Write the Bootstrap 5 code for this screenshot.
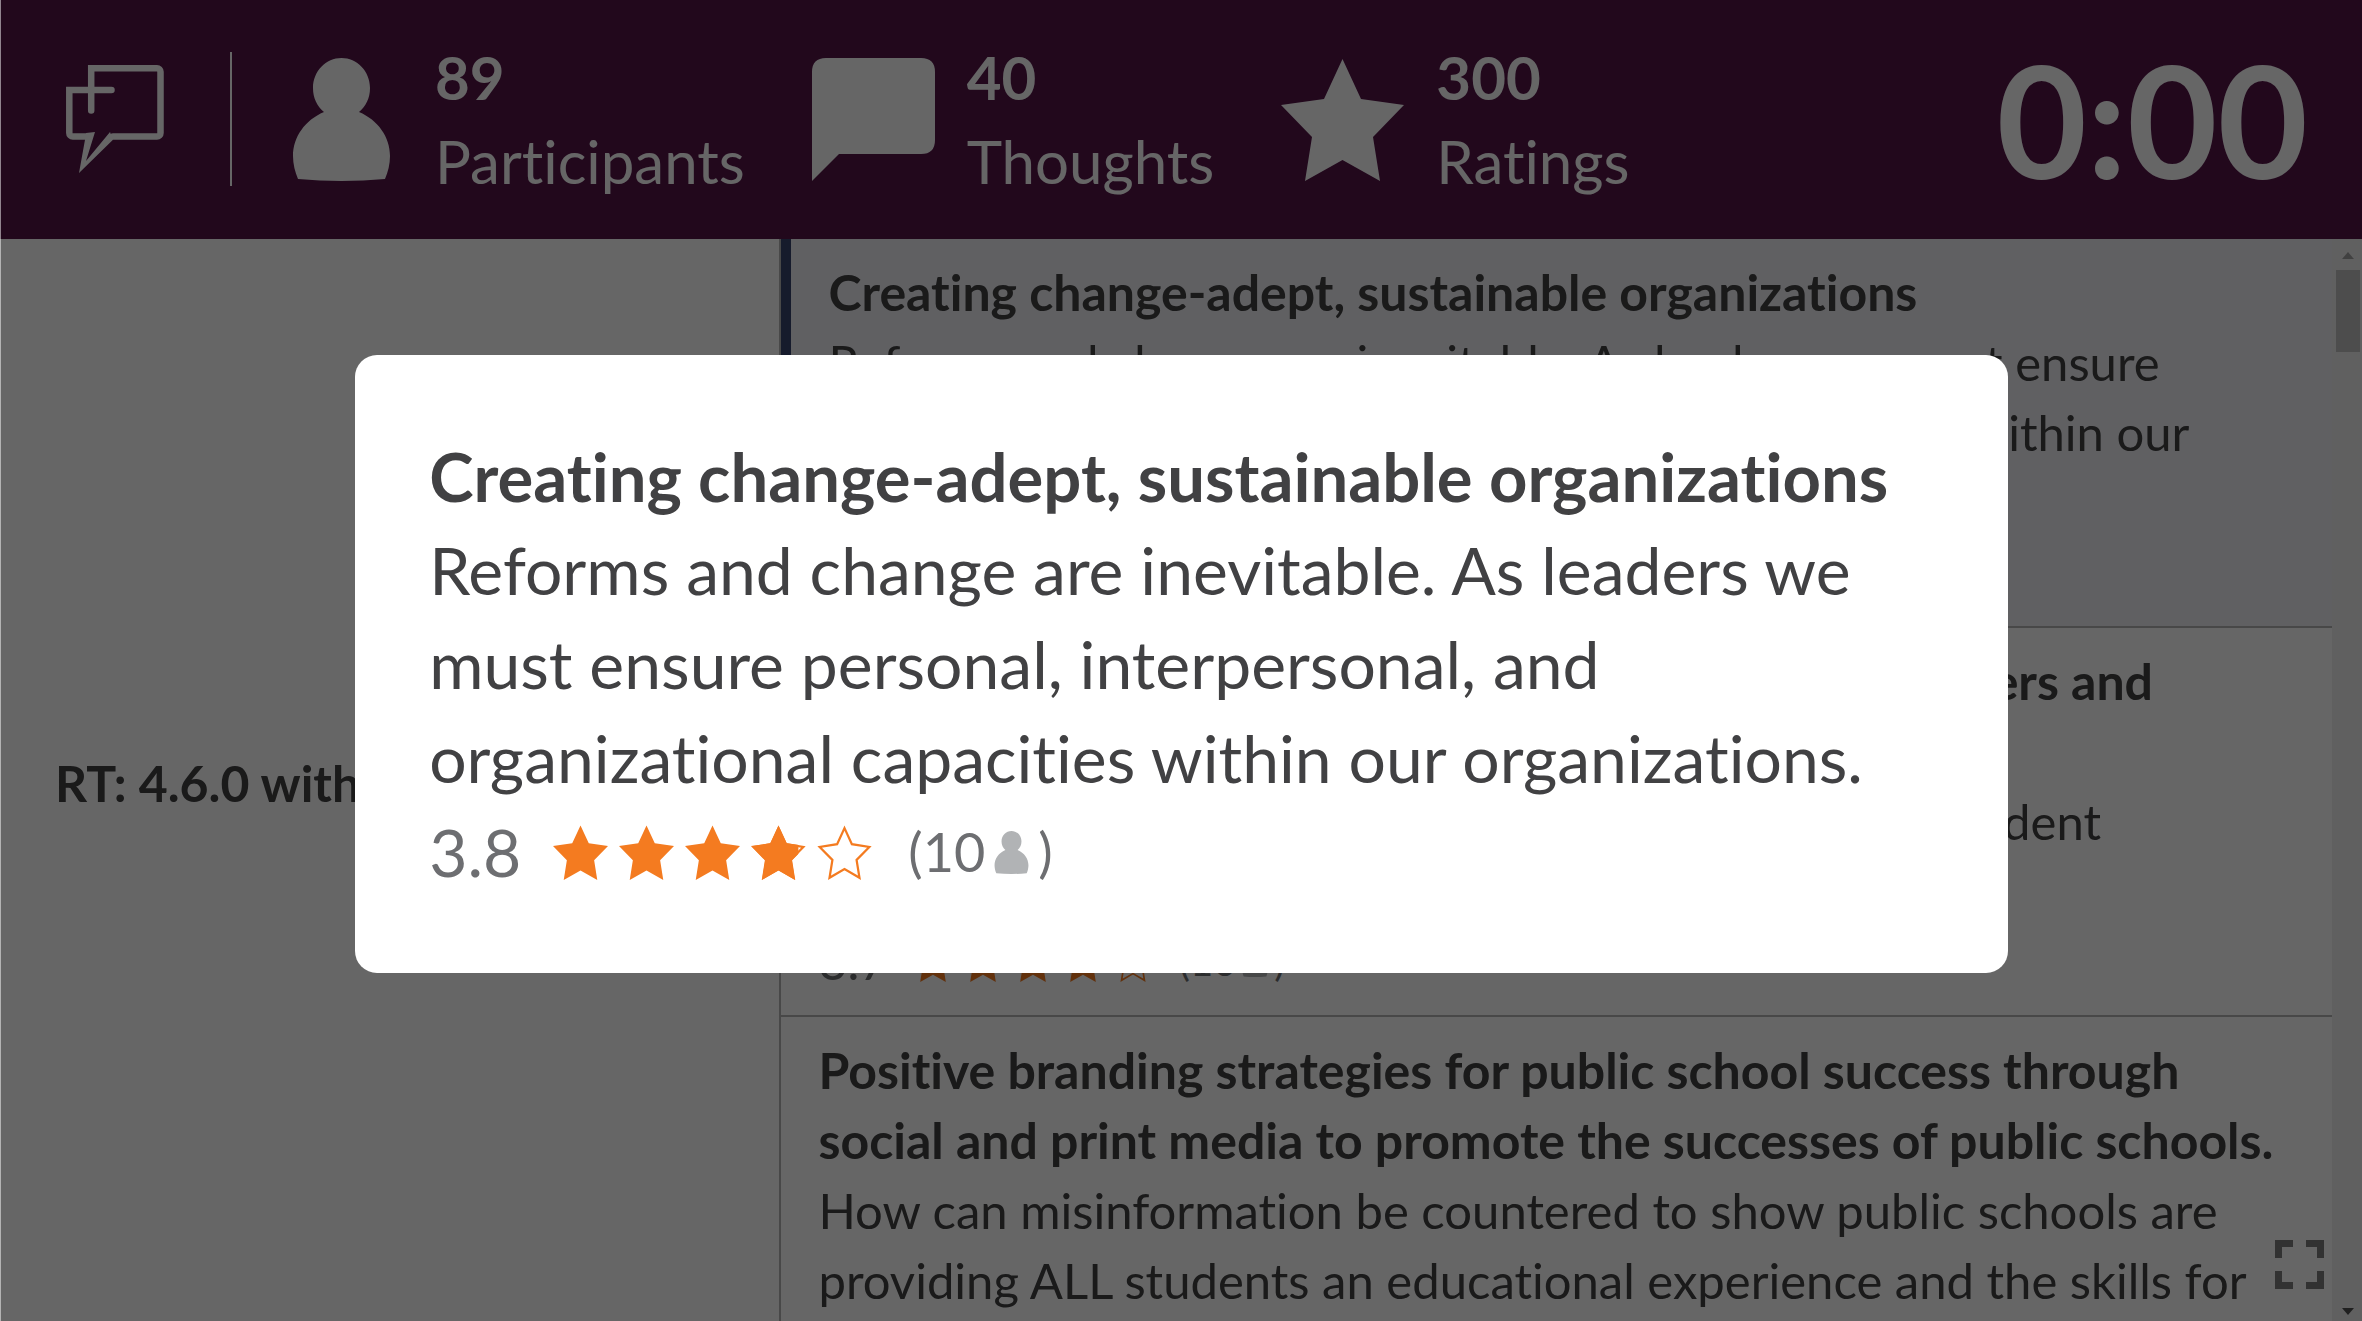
<!DOCTYPE html>
<html lang="en">
<head>
<meta charset="utf-8">
<meta name="viewport" content="width=device-width, initial-scale=1">
<title>Thoughts</title>
<link href="https://cdn.jsdelivr.net/npm/bootstrap@5.3.0/dist/css/bootstrap.min.css" rel="stylesheet">
<style>
  body { font-family: Lato, "Noto Sans", sans-serif; font-variant-ligatures: none; color: #414143; background: #fff; font-size: 50px; line-height: 70px; }
  h1, h2, p { font-size: inherit; line-height: inherit; margin: 0; }
  h1, h2 { font-weight: 700; color: inherit; }
  svg { display: block; flex: none; }

  .topbar { background: #551448; color: #fff; padding: 35px 54px 36px 66px; font-size: 60px; line-height: 84px; }
  .brand-logo { width: 98px; height: 108px; }
  .topbar-rule { width: 2px; height: 134px; margin: 0 48px 0 66px; background: #fff; }
  .stats { gap: 67px; }
  .stat { gap: 32px; }
  .stat-icon { width: 123px; height: 123px; }
  .countdown { font-size: 156px; line-height: 168px; }

  .question { width: 33%; padding: 6px 55px 0; }
  .results { border-left: 2px solid #b5b5b5; }
  .thought { padding: 18px 37px 19px; border-bottom: 2px solid #b5b5b5; }
  .thought p { font-size: 49px; }
  .thought-active { background: #f0f0f4; border-left: 10px solid #37446e; }
  .line-a { padding-right: 142px; }
  .line-b { padding-right: 194px; }

  .rating { color: #6d6e71; height: 70px; }
  .stars { gap: 8px; margin: 0 25px 0 24px; color: #f47b20; }
  .stars svg { width: 42px; height: 42px; }
  .raters { font-size: 40px; }
  .raters svg { width: 32px; height: 32px; margin: 0 3px; color: #b1b3b5; }

  .scroll-track { width: 30px; background: #f1f1f1; padding: 13px 2px 6px 4px; }
  .scroll-track .thumb { width: 24px; height: 82px; margin-top: 11px; background: #c1c1c1; }
  .fullscreen { right: 38px; bottom: 32px; }

  .shade { background: rgba(0,0,0,.6); border-left: 1px solid rgba(255,255,255,.5); padding-top: 7px; }
  .shade .modal-dialog { max-width: 70%; }
  .shade .modal-content { border: 0; border-radius: 22px; padding: 74px; font-size: 66px; line-height: 94px; color: #414143; }
  .shade h2 { font-size: 67px; }
  .shade .rating { height: 94px; }
  .shade .stars { gap: 11px; margin: 0 36px 0 32px; }
  .shade .stars svg { width: 55px; height: 55px; }
  .shade .raters { font-size: 54px; }
  .shade .raters svg { width: 43px; height: 43px; margin: 0 5px; }
</style>
<script src="https://cdn.jsdelivr.net/npm/bootstrap@5.3.0/dist/js/bootstrap.bundle.min.js"></script>
</head>
<body class="vh-100 overflow-hidden d-flex flex-column">

<svg width="0" height="0" class="position-absolute" aria-hidden="true">
  <defs>
    <clipPath id="partial"><rect width="106" height="123"/></clipPath>
    <symbol id="person" viewBox="0 0 123 123">
      <path d="M61.500 0C77 0 90 13 90 30C90 40 86 48 79 54C98 62 110 79 110 98C110 106 108 114 105 121Q61.500 125 18 121C15 114 13 106 13 98C13 79 25 62 44 54C37 48 33 40 33 30C33 13 46 0 61.500 0Z" fill="currentColor"/>
    </symbol>
    <symbol id="star" viewBox="0 0 123 123">
      <path d="M61.500 1L80 41L123 47L92 79L99 123L61.500 102L24 123L31 79L0 47L43 41Z" fill="currentColor"/>
    </symbol>
    <symbol id="star-open" viewBox="0 0 123 123">
      <path d="M61.500 7L78 43L117 49L88.500 78L95 118L61.500 98.500L28 118L34.500 78L6 49L45 43Z" fill="none" stroke="currentColor" stroke-width="5"/>
    </symbol>
    <symbol id="star-part" viewBox="0 0 123 123">
      <use href="#star-open" width="123" height="123"/>
      <g clip-path="url(#partial)"><use href="#star" width="123" height="123"/></g>
    </symbol>
  </defs>
</svg>

<header class="topbar d-flex align-items-center">
  <svg class="brand-logo" viewBox="66 65 98 108" role="img" aria-label="Logo">
    <g fill="none" stroke="#fff" stroke-width="6.500" stroke-linecap="round">
      <path d="M91.200 110.500V68.300H157a3.500 3.500 0 0 1 3.500 3.500V133a3.500 3.500 0 0 1-3.500 3.500H113" stroke-linejoin="miter"/>
      <path d="M111.500 90H69.300V133a3.500 3.500 0 0 0 3.500 3.500H88"/>
    </g>
    <path d="M85 139.700L86 133L95 132L86 161L110 132L113 139.700L79 173Z" fill="#fff"/>
  </svg>
  <div class="topbar-rule"></div>
  <div class="stats d-flex">
    <div class="stat d-flex align-items-center">
      <svg class="stat-icon"><use href="#person"/></svg>
      <div><div class="fw-bold">89</div><div>Participants</div></div>
    </div>
    <div class="stat d-flex align-items-center">
      <svg class="stat-icon" viewBox="0 0 123 123"><path d="M14 0H109Q123 0 123 14V82Q123 96 109 96H27L0 123V14Q0 0 14 0Z" fill="currentColor"/></svg>
      <div><div class="fw-bold">40</div><div>Thoughts</div></div>
    </div>
    <div class="stat d-flex align-items-center">
      <svg class="stat-icon"><use href="#star"/></svg>
      <div><div class="fw-bold">300</div><div>Ratings</div></div>
    </div>
  </div>
  <div class="countdown fw-bold ms-auto">0:00</div>
</header>

<main class="d-flex flex-grow-1 overflow-hidden position-relative">
  <section class="question d-flex align-items-center flex-shrink-0"><h1>RT: 4.6.0 with</h1></section>
  <section class="results flex-grow-1 overflow-hidden">
    <article class="thought thought-active">
      <h2>Creating change-adept, sustainable organizations</h2>
      <p>Reforms and change are inevitable. As leaders we must ensure personal, interpersonal, and organizational capacities within our organizations.</p>
      <div class="rating d-flex align-items-center"></div>
    </article>
    <article class="thought">
      <h2 class="line-a text-end">teachers and<br>&nbsp;</h2>
      <p class="line-b text-end">student<br>&nbsp;</p>
      <div class="rating d-flex align-items-center">
        <span>3.7</span>
        <span class="stars d-flex">
          <svg><use href="#star"/></svg><svg><use href="#star"/></svg><svg><use href="#star"/></svg><svg><use href="#star"/></svg><svg><use href="#star-open"/></svg>
        </span>
        <span class="raters d-flex align-items-center">(10<svg><use href="#person"/></svg>)</span>
      </div>
    </article>
    <article class="thought">
      <h2>Positive branding strategies for public school success through social and print media to promote the successes of public schools.</h2>
      <p>How can misinformation be countered to show public schools are providing ALL students an educational experience and the skills for</p>
    </article>
  </section>
  <div class="scroll-track d-flex flex-column align-items-center flex-shrink-0">
    <svg width="12" height="7"><path d="M0 7L6 0L12 7Z" fill="#a3a3a3"/></svg>
    <div class="thumb"></div>
    <svg class="mt-auto" width="12" height="7"><path d="M0 0L6 7L12 0Z" fill="#505050"/></svg>
  </div>
  <button type="button" class="fullscreen btn p-0 border-0 position-absolute" aria-label="Full screen">
    <svg width="49" height="49"><path d="M0 18V0H18V7H7V18ZM31 0H49V18H42V7H31ZM49 31V49H31V42H42V31ZM18 49H0V31H7V42H18Z" fill="#7d7d7d"/></svg>
  </button>
</main>

<div class="modal d-block shade" role="dialog" aria-modal="true" aria-labelledby="thoughtTitle">
  <div class="modal-dialog modal-dialog-centered">
    <div class="modal-content">
      <h2 id="thoughtTitle">Creating change-adept, sustainable organizations</h2>
      <p>Reforms and change are inevitable. As leaders we must ensure personal, interpersonal, and organizational capacities within our organizations.</p>
      <div class="rating d-flex align-items-center">
        <span>3.8</span>
        <span class="stars d-flex">
          <svg><use href="#star"/></svg><svg><use href="#star"/></svg><svg><use href="#star"/></svg><svg><use href="#star-part"/></svg><svg><use href="#star-open"/></svg>
        </span>
        <span class="raters d-flex align-items-center">(10<svg><use href="#person"/></svg>)</span>
      </div>
    </div>
  </div>
</div>
</body>
</html>
